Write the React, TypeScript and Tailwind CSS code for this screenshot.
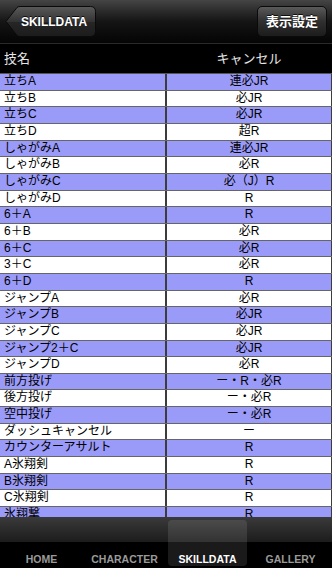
import React from "react";

const rows: [string, string][] = [
  ["立ちA", "連必JR"],
  ["立ちB", "必JR"],
  ["立ちC", "必JR"],
  ["立ちD", "超R"],
  ["しゃがみA", "連必JR"],
  ["しゃがみB", "必R"],
  ["しゃがみC", "必（J）R"],
  ["しゃがみD", "R"],
  ["6＋A", "R"],
  ["6＋B", "必R"],
  ["6＋C", "必R"],
  ["3＋C", "必R"],
  ["6＋D", "R"],
  ["ジャンプA", "必R"],
  ["ジャンプB", "必JR"],
  ["ジャンプC", "必JR"],
  ["ジャンプ2＋C", "必JR"],
  ["ジャンプD", "必R"],
  ["前方投げ", "ー・R・必R"],
  ["後方投げ", "ー・必R"],
  ["空中投げ", "ー・必R"],
  ["ダッシュキャンセル", "ー"],
  ["カウンターアサルト", "R"],
  ["A氷翔剣", "R"],
  ["B氷翔剣", "R"],
  ["C氷翔剣", "R"],
  ["氷翔撃", "R"],
];

const font = {
  fontFamily: '"Liberation Sans", "Noto Sans CJK JP", sans-serif',
};

export default function App() {
  return (
    <div
      className="w-[332px] h-[568px] bg-black flex flex-col overflow-hidden"
      style={font}
    >
      {/* Nav bar */}
      <div className="h-[44px] shrink-0 flex items-center justify-between pl-[5px] pr-[5px] bg-gradient-to-b from-[#454545] via-[#151515] to-[#050505] border-b border-[#2a2a2a]">
        <div className="relative w-[91px] h-[31px] flex items-center justify-center">
          <svg
            className="absolute inset-0"
            width="91"
            height="31"
            viewBox="0 0 91 31"
          >
            <defs>
              <linearGradient id="bk" x1="0" y1="0" x2="0" y2="1">
                <stop offset="0" stopColor="#5a5a5a" />
                <stop offset="0.5" stopColor="#333333" />
                <stop offset="0.51" stopColor="#262626" />
                <stop offset="1" stopColor="#1c1c1c" />
              </linearGradient>
            </defs>
            <path
              d="M1 15.5 L12 1.5 Q13 0.5 15 0.5 L85.5 0.5 Q90.5 0.5 90.5 5.5 L90.5 25.5 Q90.5 30.5 85.5 30.5 L15 30.5 Q13 30.5 12 29.5 Z"
              fill="url(#bk)"
              stroke="#0a0a0a"
              strokeWidth="1"
            />
          </svg>
          <span className="relative text-white font-bold text-[12px] pl-[7px] [text-shadow:0_-1px_0_rgba(0,0,0,0.8)]">
            SKILLDATA
          </span>
        </div>
        <div className="w-[70px] h-[31px] rounded-[5px] border border-[#0a0a0a] bg-gradient-to-b from-[#5a5a5a] via-[#303030] to-[#1c1c1c] flex items-center justify-center">
          <span className="text-white font-bold text-[13px] [text-shadow:0_-1px_0_rgba(0,0,0,0.8)]">
            表示設定
          </span>
        </div>
      </div>

      {/* Header */}
      <div className="h-[29px] shrink-0 flex items-center bg-black text-[#e6e6e6] text-[13px]">
        <div className="w-[166px] pl-[4px]">技名</div>
        <div className="flex-1 text-center">キャンセル</div>
      </div>

      {/* Table */}
      <div className="flex-1 overflow-hidden">
        <div className="border-t border-[#555]">
          {rows.map(([a, b], i) => (
            <div
              key={i}
              className={
                "h-[16.67px] flex border-b border-[#666] text-black text-[12px] leading-[15px] " +
                (i % 2 === 0 ? "bg-[#9a9af8]" : "bg-white")
              }
            >
              <div className="w-[165px] pl-[4px] whitespace-nowrap overflow-hidden">
                {a}
              </div>
              <div className="w-[2px] bg-[#3c3c3c]" />
              <div className="flex-1 text-center whitespace-nowrap">{b}</div>
              <div className="w-[1px] bg-[#3c3c3c]" />
            </div>
          ))}
        </div>
      </div>

      {/* Tab bar */}
      <div className="h-[51px] shrink-0 relative flex bg-[linear-gradient(to_bottom,#3a3a3a_0px,#1c1c1c_25px,#000_25px,#000_51px)]">
        {["HOME", "CHARACTER", "SKILLDATA", "GALLERY"].map((t, i) => (
          <div key={t} className="flex-1 flex justify-center">
            <div
              className={
                "w-[79px] mt-[3px] mb-[2px] rounded-[4px] flex items-end justify-center pb-[1px] " +
                (i === 2 ? "bg-white/10" : "")
              }
            >
              <span
                className={
                  "font-bold text-[10.5px] leading-[12px] " +
                  (i === 2 ? "text-white" : "text-[#9a9a9a]")
                }
              >
                {t}
              </span>
            </div>
          </div>
        ))}
      </div>
    </div>
  );
}
